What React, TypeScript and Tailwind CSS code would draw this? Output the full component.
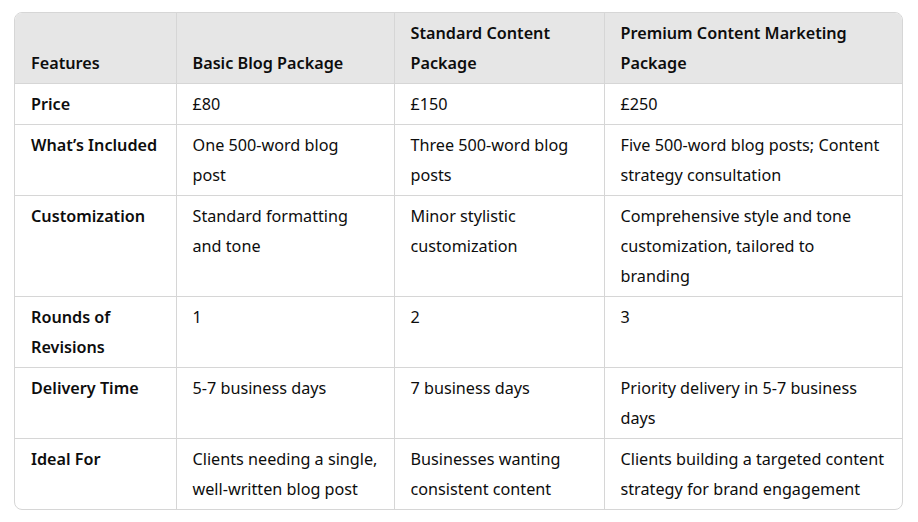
import React from "react";

// each cell is a list of lines, wrapped the way the reference wraps them
const headers: string[][] = [
  ["Features"],
  ["Basic Blog Package"],
  ["Standard Content", "Package"],
  ["Premium Content Marketing", "Package"],
];

const rows: string[][][] = [
  [["Price"], ["£80"], ["£150"], ["£250"]],
  [["What’s Included"], ["One 500-word blog", "post"], ["Three 500-word blog", "posts"], ["Five 500-word blog posts; Content", "strategy consultation"]],
  [
    ["Customization"],
    ["Standard formatting", "and tone"],
    ["Minor stylistic", "customization"],
    ["Comprehensive style and tone", "customization, tailored to", "branding"],
  ],
  [["Rounds of", "Revisions"], ["1"], ["2"], ["3"]],
  [["Delivery Time"], ["5-7 business days"], ["7 business days"], ["Priority delivery in 5-7 business", "days"]],
  [
    ["Ideal For"],
    ["Clients needing a single,", "well-written blog post"],
    ["Businesses wanting", "consistent content"],
    ["Clients building a targeted content", "strategy for brand engagement"],
  ],
];

const widths = ["w-[161px]", "w-[218px]", "w-[210px]", "w-[300px]"];

function Lines({ lines }: { lines: string[] }) {
  return (
    <>
      {lines.map((l, i) => (
        <span key={i} className="block whitespace-nowrap">
          {l}
        </span>
      ))}
    </>
  );
}

export default function App() {
  return (
    <div className="min-h-screen bg-white pt-3 pl-[14px] font-['Noto_Sans','Open_Sans',sans-serif] text-[#0d0d0d]">
      <div className="w-[889px] overflow-hidden rounded-lg border border-[#d6d6d6]">
        <table className="w-full table-fixed border-collapse text-[16.2px] leading-[30px]">
          <colgroup>
            {widths.map((w, i) => (
              <col key={i} className={w} />
            ))}
          </colgroup>
          <thead>
            <tr className="bg-[#e6e6e6]">
              {headers.map((h, i) => (
                <th
                  key={i}
                  className={`border-b border-[#d6d6d6] px-4 py-[5px] text-left align-bottom font-semibold ${
                    i < headers.length - 1 ? "border-r" : ""
                  }`}
                >
                  <Lines lines={h} />
                </th>
              ))}
            </tr>
          </thead>
          <tbody>
            {rows.map((r, ri) => (
              <tr key={ri}>
                {r.map((c, ci) => (
                  <td
                    key={ci}
                    className={`border-[#d6d6d6] px-4 py-[5px] align-top ${ci === 0 ? "font-semibold" : ""} ${
                      ci < r.length - 1 ? "border-r" : ""
                    } ${ri < rows.length - 1 ? "border-b" : ""}`}
                  >
                    <Lines lines={c} />
                  </td>
                ))}
              </tr>
            ))}
          </tbody>
        </table>
      </div>
    </div>
  );
}
